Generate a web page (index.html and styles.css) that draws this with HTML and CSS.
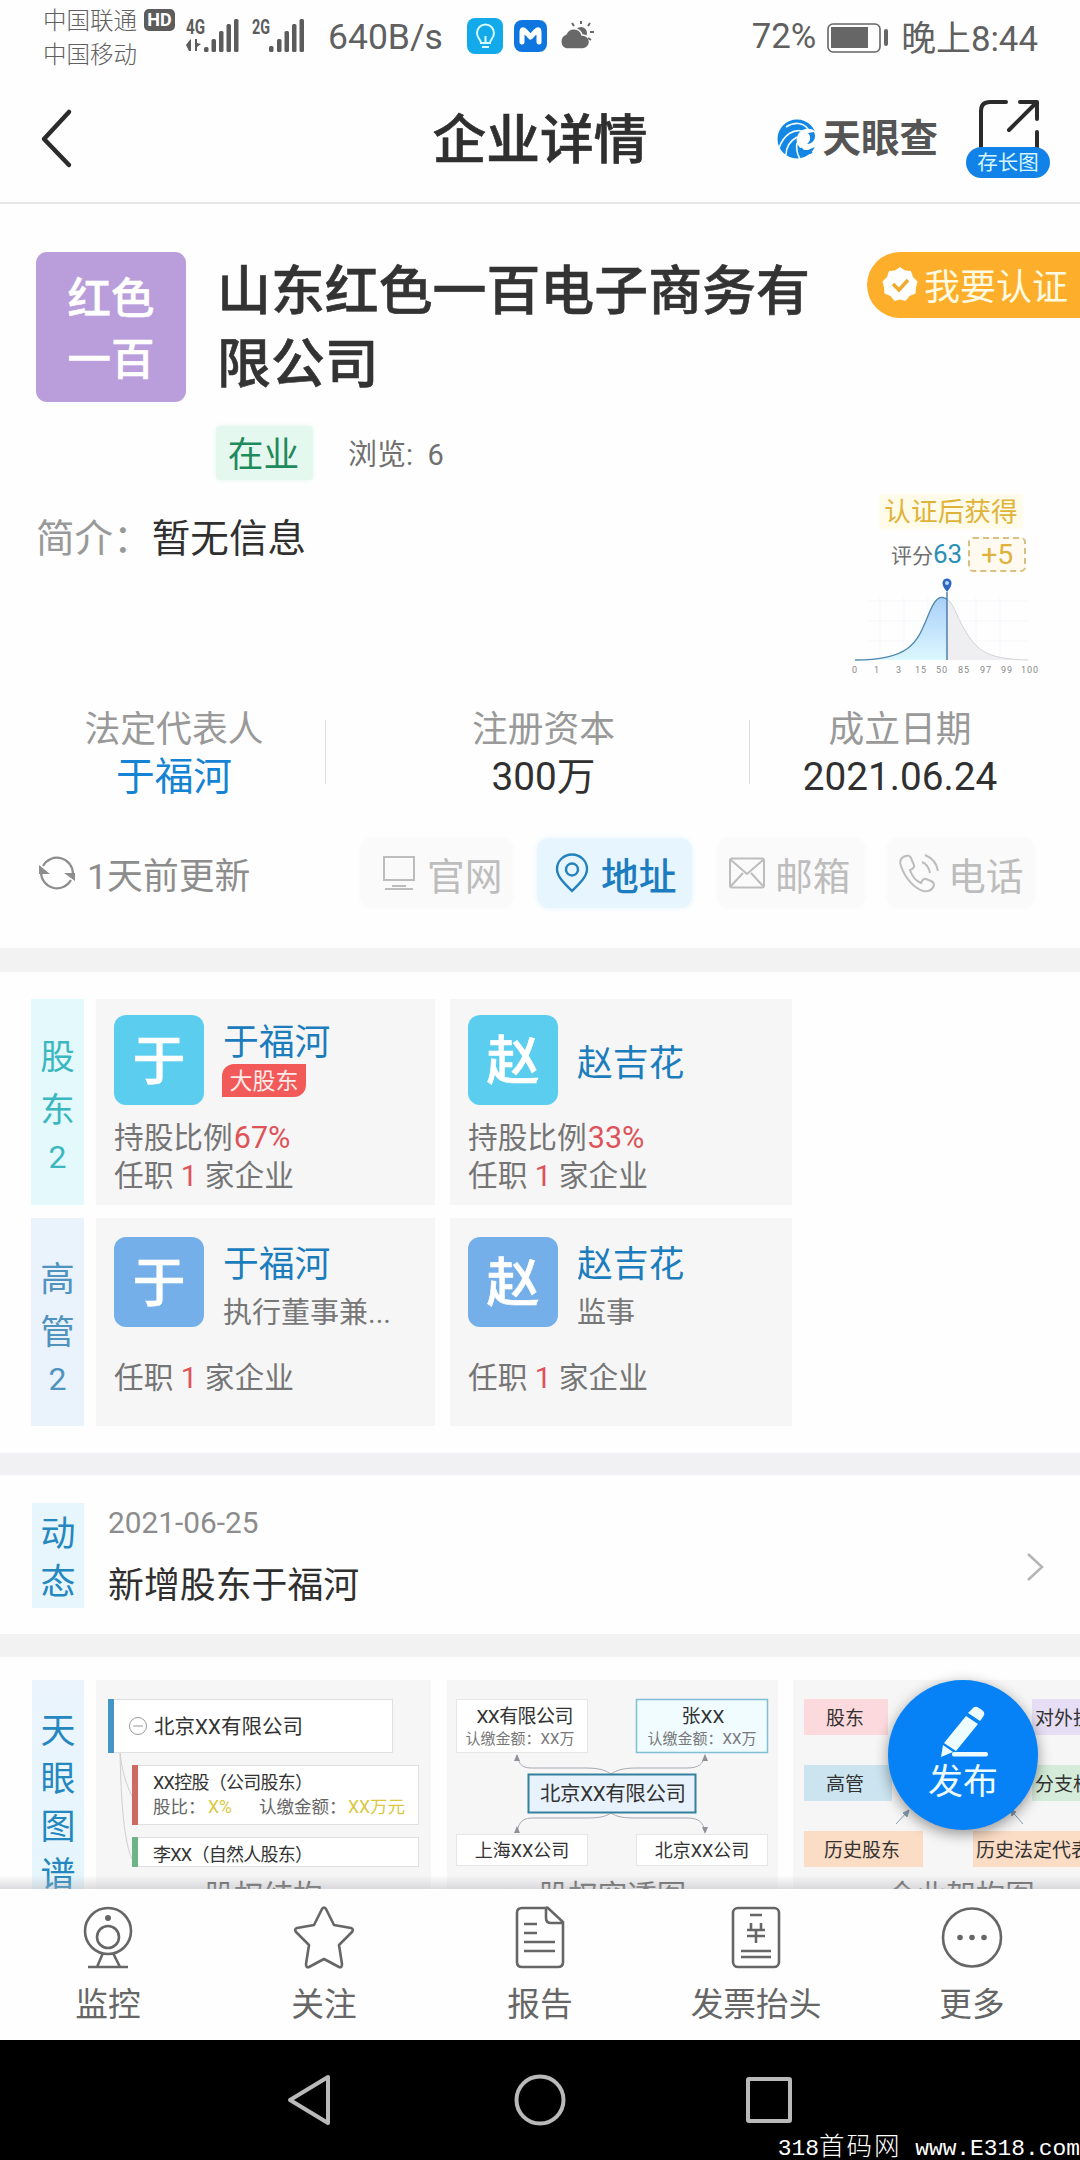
FILE: index.html
```html
<!DOCTYPE html>
<html lang="zh-CN">
<head>
<meta charset="utf-8">
<title>企业详情</title>
<link rel="stylesheet" href="styles.css">
</head>
<body>
<div class="phone">
  <div class="status">
    <div class="carriers">
      <div class="carrier">中国联通<span class="hd">HD</span></div>
      <div class="carrier">中国移动</div>
    </div>
    <svg class="signals" width="122" height="36" viewBox="0 0 122 36">
      <g fill="#5c5c5c">
        <text class="net" x="0" y="17" textLength="19" lengthAdjust="spacingAndGlyphs">4G</text>
        <path d="M3 34V24L0 28M3 24v10h2V22zM9 22v12h2v-4l4-3-4-1v-4z"/>
        <rect x="18" y="30" width="4.5" height="5" rx="1.5"/><rect x="25.500" y="22" width="4.500" height="13" rx="1.500"/><rect x="33" y="14" width="4.500" height="21" rx="1.500"/><rect x="40.500" y="7" width="4.500" height="28" rx="1.500"/><rect x="48" y="2" width="4.500" height="33" rx="1.500"/>
        <text class="net" x="66" y="17" textLength="18" lengthAdjust="spacingAndGlyphs">2G</text>
        <rect x="83" y="29" width="4.500" height="6" rx="1.500"/><rect x="91" y="22" width="4.500" height="13" rx="1.500"/><rect x="98.500" y="14" width="4.500" height="21" rx="1.500"/><rect x="106" y="7" width="4.500" height="28" rx="1.500"/><rect x="113.500" y="2" width="4.500" height="33" rx="1.500"/>
      </g>
    </svg>
    <span class="speed">640B/s</span>
    <svg class="status-apps" width="130" height="38" viewBox="0 0 130 38">
      <rect x="1" y="1" width="36" height="36" rx="8" fill="#12aaea"/>
      <g fill="none" stroke="#d8fbff" stroke-width="2"><path d="M15 26c0-3-4-5-4-10a8.500 8.500 0 0 1 17 0c0 5-4 7-4 10zM16 30h7M19.500 25v-6"/></g>
      <rect x="48" y="3" width="33" height="32" rx="8" fill="#0f76e0"/>
      <path d="M56 25V15q0-4 3-1l5.500 6 5.500-6q3-3 3 1v10" fill="none" stroke="#fff" stroke-width="5" stroke-linecap="round" stroke-linejoin="round"/>
      <g fill="#686868"><circle cx="115" cy="16" r="6"/><path d="M100 32a8 8 0 0 1 0-15 8.500 8.500 0 0 1 16 1 7 7 0 0 1 1 14z" stroke="#fff" stroke-width="1.500"/></g>
      <path d="M108 9l-2-3M115 7V4M122 9l2-3M124 15h4M122 21l3 2" stroke="#686868" stroke-width="2"/>
    </svg>
    <div class="status-right">
      <span>72%</span>
      <svg width="62" height="30" viewBox="0 0 62 30"><rect x="1" y="1" width="52" height="28" rx="5" fill="none" stroke="#666" stroke-width="1.600"/><rect x="4" y="4" width="37" height="21" fill="#666"/><rect x="57" y="6" width="4" height="17" rx="2" fill="#666"/></svg>
      <span>晚上8:44</span>
    </div>
  </div>

  <header class="appbar">
    <svg width="34" height="60" viewBox="0 0 34 60"><path d="M31 3L6 30l25 26" fill="none" stroke="#2b2b2b" stroke-width="4.500" stroke-linecap="round" stroke-linejoin="round"/></svg>
    <h1>企业详情</h1>
    <div class="appbar-right">
      <svg class="swirl" width="40" height="40" viewBox="0 0 40 40">
        <circle cx="20" cy="20" r="19.500" fill="#1486e4"/>
        <path d="M40 14c-4-5-13-6-18 0-6 8 0 18 9 17l9-4z" fill="#fff"/>
        <path d="M37 13c3 6-1 12-7 12 4-3 4-8 1-11z" fill="#1486e4"/>
        <g fill="none" stroke="#e9fbff" stroke-width="1.700"><path d="M25 12C17 10 7 15 2 29M31 10C26 3 17 3 9 8M20 18C13 22 9 28 9 36M20 24c-1 6 0 11 3 16"/></g>
        <path d="M24 29c3 5 7 6 11 4" fill="none" stroke="#1486e4" stroke-width="2"/>
      </svg>
      <span class="brand">天眼查</span>
      <div class="share">
        <svg width="62" height="50" viewBox="0 0 62 50"><path d="M3 49V12q0-9 9-9h16M42 3h17v17M59 33v16M31 31L58 4" fill="none" stroke="#2b2b2b" stroke-width="4" stroke-linecap="round" stroke-linejoin="round"/></svg>
        <span>存长图</span>
      </div>
    </div>
  </header>

  <main class="content">
    <section class="profile">
      <div class="company">
        <div class="logo">红色<br>一百</div>
        <h2>山东红色一百电子商务有限公司</h2>
        <div class="certify">
          <svg width="36" height="36" viewBox="0 0 36 36"><path d="M18 0l5 3.500 6 .5 2 6 4.500 4.500-1.500 6-.500 6-6 2.500-4 5-5.500-1.500-5.500 1.500-4-5-6-2.500-.500-6-1.500-6L5 10l2-6 6-.5z" fill="#fff"/><path d="M11 17l6 6 9-10" fill="none" stroke="#f0a92b" stroke-width="3.500"/></svg>
          <span>我要认证</span>
        </div>
      </div>
      <div class="tags"><span class="open">在业</span><span class="views">浏览:&nbsp; 6</span></div>
      <div class="about">
        <div class="intro"><span>简介：</span>暂无信息</div>
        <div class="score">
          <div class="score-title">认证后获得</div>
          <div class="score-line">评分<b>63</b><i>+5</i></div>
          <svg class="bell" width="200" height="102" viewBox="0 0 200 102">
            <defs><linearGradient id="bl" x1="0" y1="0" x2="0" y2="1"><stop offset="0" stop-color="#a9cff7"/><stop offset="1" stop-color="#dcf7ff"/></linearGradient></defs>
            <path d="M18 24h160M18 44h160M18 64h160M30 20v60M54 20v60M78 20v60M126 20v60M150 20v60" stroke="#f5f7fb"/>
            <path d="M5 83C65 83 68 62 80 34 87 18 92 19 97 22V83z" fill="url(#bl)"/>
            <path d="M97 22c6 4 9 15 14 24 14 26 22 36 67 37H97z" fill="#efeff1"/>
            <path d="M97 22c6 4 9 15 14 24 14 26 22 36 67 37" fill="none" stroke="#d2d4d8"/>
            <path d="M5 83C65 83 68 62 80 34 87 18 92 19 97 22" fill="none" stroke="#4d88ae" stroke-width="1.300"/>
            <path d="M97 15v68" stroke="#3b6f9f" stroke-width="1.300"/>
            <path d="M97 15c-3-4-4.500-6-4.500-9a4.500 4.500 0 0 1 9 0c0 3-1.500 5-4.500 9z" fill="#2e66c0"/><circle cx="97" cy="6" r="2" fill="#b5d8ff"/>
            <g class="ticks"><text x="5" y="96">0</text><text x="27" y="96">1</text><text x="49" y="96">3</text><text x="71" y="96">15</text><text x="92" y="96">50</text><text x="114" y="96">85</text><text x="136" y="96">97</text><text x="157" y="96">99</text><text x="180" y="96">100</text></g>
          </svg>
        </div>
      </div>
      <div class="facts">
        <div class="fact fact-a"><span>法定代表人</span><b class="link">于福河</b></div>
        <div class="fact fact-b"><span>注册资本</span><b>300万</b></div>
        <div class="fact fact-c"><span>成立日期</span><b>2021.06.24</b></div>
      </div>
      <div class="contacts">
        <div class="updated">
          <svg width="38" height="38" viewBox="0 0 38 38"><path d="M5 12A16 16 0 0 1 35 20M33 26A16 16 0 0 1 3 18" fill="none" stroke="#8d8d8d" stroke-width="2.200"/><path d="M26 19h11v8zM12 20H1v-9z" fill="#8d8d8d"/></svg>
          <span>1天前更新</span>
        </div>
        <div class="chip chip-site"><svg width="34" height="36" viewBox="0 0 34 36"><path d="M2 2h30v23H2zM3 34h28M10 31h14" fill="none" stroke="#bdbdbd" stroke-width="2"/></svg><span>官网</span></div>
        <div class="chip chip-addr"><svg width="36" height="40" viewBox="0 0 36 40"><path d="M18 38C11 31 3 24 3 16a15 14.500 0 0 1 30 0c0 8-8 15-15 22z" fill="none" stroke="#2382bd" stroke-width="2.400"/><circle cx="18" cy="16.500" r="6" fill="none" stroke="#2382bd" stroke-width="2.400"/></svg><span>地址</span></div>
        <div class="chip chip-mail"><svg width="38" height="32" viewBox="0 0 38 32"><rect x="2" y="1.500" width="34" height="29" rx="2" fill="none" stroke="#bdbdbd" stroke-width="2"/><path d="M3 3l16 14L35 3M3 29l12-13M35 29L23 16" fill="none" stroke="#bdbdbd" stroke-width="2"/></svg><span>邮箱</span></div>
        <div class="chip chip-tel"><svg width="42" height="40" viewBox="0 0 42 40"><g fill="none" stroke="#bdbdbd" stroke-width="2"><path d="M8 3C3 4 1 8 3 13c4 12 13 22 22 25 5 1 10-1 11-6 0-2-1-3-3-4l-5-2c-3-1-4 2-5 4-5-2-9-7-11-13 2-1 5-2 4-5l-3-7c-1-2-3-3-5-2z"/><path d="M24 9c5 2 7 6 8 11M27 2c7 3 12 9 13 16"/></g></svg><span>电话</span></div>
      </div>
    </section>

    <section class="people">
      <div class="people-row holders">
        <div class="side">股<br>东<span>2</span></div>
        <div class="person">
          <div class="who"><div class="face">于</div><div><div class="name">于福河</div><span class="major">大股东</span></div></div>
          <p>持股比例<em class="share-rate">67%</em></p><p>任职 <em>1</em> 家企业</p>
        </div>
        <div class="person">
          <div class="who who-single"><div class="face">赵</div><div class="name">赵吉花</div></div>
          <p>持股比例<em class="share-rate">33%</em></p><p>任职 <em>1</em> 家企业</p>
        </div>
      </div>
      <div class="people-row execs">
        <div class="side">高<br>管<span>2</span></div>
        <div class="person">
          <div class="who"><div class="face">于</div><div><div class="name">于福河</div><div class="role">执行董事兼...</div></div></div>
          <p>任职 <em>1</em> 家企业</p>
        </div>
        <div class="person">
          <div class="who"><div class="face">赵</div><div><div class="name">赵吉花</div><div class="role">监事</div></div></div>
          <p>任职 <em>1</em> 家企业</p>
        </div>
      </div>
    </section>

    <section class="news">
      <div class="side">动<br>态</div>
      <div class="news-text"><time>2021-06-25</time><p>新增股东于福河</p></div>
      <svg width="20" height="30" viewBox="0 0 20 30"><path d="M3 2l14 13L3 28" fill="none" stroke="#b5b5b5" stroke-width="2.500"/></svg>
    </section>

    <section class="graphs">
      <div class="side">天<br>眼<br>图<br>谱</div>
      <div class="graph graph-a">
        <svg width="335" height="195" viewBox="96 1680 335 195">
          <path d="M120 1752c1 50 4 90 12 107M120 1752c2 20 6 32 12 44" fill="none" stroke="#d0d0d0"/>
          <rect x="108.500" y="1699.500" width="284" height="53" fill="#fff" stroke="#e0e0e0"/><rect x="108" y="1699" width="6" height="54" fill="#4595c5"/>
          <circle cx="138" cy="1726" r="8.500" fill="none" stroke="#999"/><path d="M133 1726h10" stroke="#999"/>
          <text class="t20" x="154" y="1734" textLength="149">北京XX有限公司</text>
          <rect x="132.500" y="1765.500" width="286" height="59" fill="#fff" stroke="#e0e0e0"/><rect x="132" y="1765" width="6" height="60" fill="#cd6a63"/>
          <text class="t18" x="153" y="1789" textLength="160">XX控股（公司股东）</text>
          <text class="t17" x="153" y="1813">股比：</text><text class="t17 gold" x="208" y="1813">X%</text><text class="t17" x="259" y="1813">认缴金额：</text><text class="t17 gold" x="348" y="1813">XX万元</text>
          <rect x="132.500" y="1837.500" width="286" height="29" fill="#fff" stroke="#e0e0e0"/><rect x="132" y="1837" width="6" height="30" fill="#6fb487"/>
          <text class="t18" x="153" y="1861" textLength="160">李XX（自然人股东）</text>
        </svg>
        <div class="caption">股权结构</div>
      </div>
      <div class="graph graph-b">
        <svg width="331" height="195" viewBox="447 1680 331 195">
          <g fill="none" stroke="#a9a9b2"><path d="M517 1755c2 12 8 13 16 13h52c14 0 20 2 26 6 6-4 12-6 26-6h50c12 0 16-4 18-13M517 1832c2-12 8-14 16-14h52c14 0 20-1 26-5 6 4 12 5 26 5h50c12 0 16 4 18 14"/></g>
          <path d="M514 1761l3-7 3 7zM702 1761l3-7 3 7zM514 1833l3-7 3 7zM702 1827l3 7 3-7z" fill="#909098"/>
          <g fill="#fff" stroke="#e6e6e6"><rect x="456.500" y="1699.500" width="131" height="53"/><rect x="456.500" y="1834.500" width="131" height="31"/><rect x="636.500" y="1834.500" width="131" height="31"/></g>
          <rect x="636.500" y="1699.500" width="131" height="53" fill="#f0fcff" stroke="#80c0d5" stroke-width="1.500"/>
          <rect x="528.500" y="1774.500" width="167" height="38" fill="#e7f2fc" stroke="#34809f" stroke-width="2"/>
          <g text-anchor="middle"><text class="t19" x="525" y="1723" textLength="97">XX有限公司</text><text class="t15" x="520" y="1744">认缴金额：XX万</text><text class="t19" x="703" y="1723">张XX</text><text class="t15" x="702" y="1744">认缴金额：XX万</text><text class="t20" x="613" y="1801" textLength="146">北京XX有限公司</text><text class="t18" x="522" y="1857">上海XX公司</text><text class="t18" x="702" y="1857">北京XX公司</text></g>
        </svg>
        <div class="caption">股权穿透图</div>
      </div>
      <div class="graph graph-c">
        <svg width="330" height="195" viewBox="793 1680 330 195">
          <rect x="804" y="1699" width="84" height="36" fill="#fbd9dc"/><rect x="804" y="1765" width="88" height="36" fill="#cbe4f0"/><rect x="804" y="1831" width="119" height="36" fill="#fbdcc4"/><rect x="1032" y="1699" width="88" height="36" fill="#e6def4"/><rect x="1032" y="1765" width="88" height="36" fill="#d6ecda"/><rect x="973" y="1831" width="150" height="36" fill="#fbdcc4"/>
          <g stroke="#879daf" fill="#7f9db8"><path d="M896 1824l13-14M1023 1824l-13-15"/><path d="M909 1810l-2 7-4-4zM1010 1809l2 7 4-4z"/></g>
          <text class="t19" x="826" y="1725">股东</text><text class="t19" x="826" y="1791">高管</text><text class="t19" x="824" y="1857">历史股东</text><text class="t19" x="1035" y="1725">对外投资</text><text class="t19" x="1035" y="1791">分支机构</text><text class="t19" x="976" y="1857">历史法定代表人</text>
        </svg>
        <div class="caption">企业架构图</div>
      </div>
    </section>
    <div class="fade"></div>
    <div class="publish">
      <svg width="56" height="54" viewBox="0 0 56 54"><g fill="#edfcff"><path d="M37 4q3-4 7-1l3 2q4 3 1 7l-3 4-12-8zM31 11l12 8-22 27-12-8zM8 40l10 7-12 5z"/><rect x="17" y="47" width="36" height="4.500" rx="2"/></g></svg>
      <span>发布</span>
    </div>
  </main>

  <nav class="tabs">
    <div class="tab"><svg width="62" height="64" viewBox="0 0 62 64"><g fill="none" stroke="#666" stroke-width="2.600"><circle cx="31" cy="26" r="23"/><circle cx="31" cy="32" r="11"/><path d="M26 48l-6 14M36 48l7 14M11 62h40"/></g><circle cx="31" cy="13" r="3" fill="#666"/></svg><span>监控</span></div>
    <div class="tab"><svg width="62" height="64" viewBox="0 0 62 64"><path d="M29 4q2-3 4 0l8 16 17 3q3 1 1 4L46 40l3 19q0 4-3 3L31 54l-15 8q-3 1-3-3l3-19L3 27q-2-3 1-4l17-3z" fill="none" stroke="#666" stroke-width="2.600" stroke-linejoin="round"/></svg><span>关注</span></div>
    <div class="tab"><svg width="62" height="64" viewBox="0 0 62 64"><path d="M37 3H13q-5 0-5 5v49q0 5 5 5h36q5 0 5-5V17L39 3q-2-1-2 1v9q0 5 5 5h12M15 19h13M15 28h13M15 37h31M15 46h31" fill="none" stroke="#666" stroke-width="2.600"/></svg><span>报告</span></div>
    <div class="tab"><svg width="62" height="64" viewBox="0 0 62 64"><rect x="8" y="3" width="46" height="59" rx="5" fill="none" stroke="#666" stroke-width="2.600"/><path d="M25 10h12M26 18v6M36 18v6M22 25h18M22 31h18M31 25v13M16 46h30M16 52h30" fill="none" stroke="#666" stroke-width="2.600"/></svg><span>发票抬头</span></div>
    <div class="tab"><svg width="62" height="64" viewBox="0 0 62 64"><circle cx="31" cy="32.500" r="29" fill="none" stroke="#666" stroke-width="2.600"/><g fill="#666"><circle cx="19" cy="32.500" r="2.800"/><circle cx="31" cy="32.500" r="2.800"/><circle cx="43" cy="32.500" r="2.800"/></g></svg><span>更多</span></div>
  </nav>
  <div class="system">
    <svg width="520" height="60" viewBox="0 0 520 60"><g fill="none" stroke="#b9b9b9" stroke-width="4" stroke-linejoin="round"><path d="M48 7v46L10 30z"/><circle cx="260" cy="30" r="23.500"/><rect x="468" y="9" width="42" height="42" rx="1"/></g></svg>
    <div class="watermark">318<span>首码网</span> www.E318.com</div>
  </div>
</div>
</body>
</html>
```

FILE: styles.css
```css
* { box-sizing: border-box; }
body { margin: 0; background: #fff; font-family: Roboto, "Noto Sans CJK SC", sans-serif; color: #333; }
h1, h2, p { margin: 0; }
svg { display: block; flex: none; overflow: visible; }
em, i { font-style: normal; }
.phone { width: 1080px; height: 2160px; display: flex; flex-direction: column; overflow: hidden; background: #fefefe; }

.status { height: 75px; flex: none; display: flex; align-items: flex-start; color: #606060; padding: 4px 42px 0 43px; white-space: nowrap; font-weight: 300; }
.carriers { width: 143px; }
.carrier { height: 34px; line-height: 34px; font-size: 23.5px; display: flex; align-items: center; }
.hd { margin: -2px 0 0 7px; width: 31px; height: 22px; border-radius: 5px; background: #5c5c5c; color: #fff; font-weight: 700; font-size: 18px; line-height: 22px; text-align: center; }
.signals { margin-top: 13px; }
.net { font-size: 20px; font-weight: 700; }
.speed { margin-left: 20px; width: 137px; font-size: 35.5px; line-height: 67px; font-weight: 400; }
.status-apps { margin: 13px 0 0 1px; }
.status-right { margin-left: auto; display: flex; align-items: center; gap: 11px; height: 64px; font-size: 34.8px; font-weight: 400; }
.status-right svg { margin: 3px 1px 0 0; }

.appbar { height: 129px; flex: none; display: grid; grid-template-columns: 1fr auto 1fr; align-items: center; padding: 0 30px 0 38px; border-bottom: 2px solid #e6e6e6; }
.appbar h1 { font-size: 53.7px; font-weight: 500; line-height: 80px; margin: 0 8px 0 0; color: #2f2f2f; padding-top: 4px; -webkit-text-stroke: .7px currentColor; }
.appbar-right { display: flex; align-items: center; justify-content: flex-end; }
.brand { font-size: 38.5px; font-weight: 700; margin: 0 28px 0 5px; line-height: 50px; color: #555; }
.share { width: 84px; display: flex; flex-direction: column; align-items: center; margin-top: -1px; }
.share span { width: 84px; height: 31px; border-radius: 16px; background: #1182e8; color: #d5f6ff; font-size: 20.5px; line-height: 32px; text-align: center; margin-top: -2px; position: relative; }
.share svg { margin-left: 1px; }

.content { flex: 1; overflow: hidden; position: relative; min-height: 0; }
.profile { height: 744px; padding-top: 48px; }
.company { display: flex; align-items: flex-start; height: 174px; padding-left: 36px; }
.logo { width: 150px; height: 150px; border-radius: 11px; background: #b99edb; color: #fff; font-size: 43.5px; font-weight: 500; line-height: 61px; padding-top: 17px; text-align: center; -webkit-text-stroke: .5px currentColor; }
.company h2 { width: 602px; margin-left: 31px; font-size: 53.9px; line-height: 73px; font-weight: 500; padding-top: 3px; color: #333; -webkit-text-stroke: .6px currentColor; }
.certify { margin-left: auto; width: 213px; height: 66px; border-radius: 33px 0 0 33px; background: #fdae2b; color: #fffbe2; display: flex; align-items: center; padding-left: 15px; gap: 6px; font-size: 36px; }
.certify span { margin-top: -3px; }
.tags { display: flex; height: 54px; padding-left: 216px; line-height: 58px; }
.open { width: 97px; height: 54px; background: #e5f8f0; color: #1f8a5b; font-size: 35.7px; text-align: center; padding-right: 2px; border-radius: 4px; box-shadow: 0 0 5px #e5f8f0; }
.views { margin-left: 35px; font-size: 29px; color: #707070; }
.about { display: flex; justify-content: space-between; height: 231px; padding: 15px 30px 0 36px; }
.intro { font-size: 38.6px; line-height: 88px; color: #303030; }
.intro span { color: #999; }
.score { width: 200px; }
.score-title { width: 142px; margin-left: 30px; height: 33px; line-height: 33px; padding-top: 1px; font-size: 26.7px; text-align: center; color: #dfb33a; background: #fffbe9; box-shadow: 0 0 5px #fffbe9; }
.score-line { display: flex; align-items: center; height: 49px; padding: 3px 0 0 41px; font-size: 21px; color: #707070; }
.score-line b { font-size: 26px; font-weight: 400; color: #2a8fb4; }
.score-line i { margin-left: 6px; width: 58px; height: 35px; border: 2px dashed #d9bf83; border-radius: 5px; background: #fffaf0; color: #e0b13c; font-size: 28.5px; line-height: 31px; text-align: center; }
.ticks { font-size: 9px; text-anchor: middle; letter-spacing: 1px; }
.facts { display: flex; height: 125px; }
.fact { display: flex; flex-direction: column; align-items: center; font-size: 35.8px; color: #999; }
.fact span { line-height: 36px; padding-top: 1px; }
.fact b { font-weight: 400; font-size: 38.7px; line-height: 57px; color: #303030; }
.fact b.link { color: #1583d3; }
.fact-a { width: 326px; padding-left: 22px; background: linear-gradient(#e4e0e2, #e4e0e2) right 9px / 1px 64px no-repeat; }
.fact-b { width: 424px; padding-left: 11px; background: linear-gradient(#ddd, #ddd) right 9px / 1px 64px no-repeat; }
.fact-c { width: 300px; }
.contacts { display: flex; height: 74px; align-items: center; padding-left: 38px; font-size: 35.8px; color: #8d8d8d; }
.updated { display: flex; align-items: center; width: 322px; gap: 11px; }
.chip { display: flex; align-items: center; height: 70px; border-radius: 12px; background: #fafafa; box-shadow: 0 0 5px #fafafa; color: #bdbdbd; font-size: 37.7px; gap: 11px; }
.chip-site { width: 153px; padding-left: 22px; }
.chip-addr { width: 155px; margin-left: 24px; padding-left: 17px; background: #e7f5fe; color: #1c7cc0; box-shadow: 0 0 6px #e7f5fe; font-weight: 500; }
.chip-mail { width: 148px; margin-left: 25px; padding-left: 11px; gap: 9px; }
.chip-tel { width: 148px; margin-left: 22px; padding-left: 11px; gap: 8px; }

.people { border-top: 24px solid #f2f2f3; padding-top: 27px; height: 505px; padding-left: 31px; }
.people-row { display: flex; height: 206px; margin-bottom: 13px; }
.side { width: 53px; flex: none; text-align: center; font-size: 35px; line-height: 53px; }
.holders .side { background: #e4f9fc; color: #3bb7c1; padding-top: 32px; line-height: 53px; }
.execs .side { background: #eaf2fc; color: #4f93be; padding-top: 35px; line-height: 53px; }
.people-row.execs { height: 208px; }
.people-row .side { font-size: 34.5px; }
.side span { display: block; font-size: 32px; line-height: 40px; }
.person { width: 339px; margin-left: 12px; background: #f6f6f7; padding: 16px 0 0 18px; }
.person + .person { width: 342px; margin-left: 15px; }
.execs .person { padding-top: 19px; }
.who { display: flex; height: 104px; gap: 19px; }
.face { width: 90px; height: 90px; border-radius: 12px; background: #5bcdef; color: #fff; font-size: 53px; font-weight: 500; text-align: center; line-height: 94px; -webkit-text-stroke: .6px currentColor; }
.execs .face { background: #74afe9; }
.name { font-size: 35.8px; color: #1c7dbd; line-height: 50px; margin-top: 3px; }
.who-single .name { margin-top: 24px; }
.major { display: block; width: 84px; height: 33px; margin: -4px 0 0 -1px; border-radius: 12px 0 12px 0; background: #f15a59; color: #ffeaea; font-size: 23px; line-height: 35px; text-align: center; }
.role { font-size: 29px; color: #777; line-height: 40px; margin-top: 3px; }
.person p { font-size: 29.7px; line-height: 38px; color: #757575; white-space: pre; }
.person em { color: #de5358; }
.share-rate { font-size: 30.5px; margin-left: 1px; }
.execs .person p { margin-top: 18px; }

.news { border-top: 22px solid #f1f1f3; border-bottom: 23px solid #f2f2f3; height: 204px; display: flex; padding: 28px 35px 0 32px; }
.news .side { width: 52px; height: 105px; background: #e7f5fd; color: #2587c0; line-height: 48px; padding-top: 8px; }
.news-text { flex: 1; padding-left: 24px; }
.news time { display: block; font-size: 29.8px; line-height: 40px; color: #8c8c8c; }
.news p { font-size: 35.9px; line-height: 60px; margin-top: 13px; color: #2f2f2f; }
.news svg { margin-top: 49px; }

.graphs { display: flex; padding: 23px 0 0 32px; width: 1160px; }
.graphs .side { width: 52px; height: 230px; background: linear-gradient(#ebf4fd, #e5f6fd); color: #2587bf; line-height: 48px; padding-top: 28px; }
.graph { flex: none; background: #f7f6f7; height: 240px; }
.graph-a { width: 335px; margin-left: 12px; }
.graph-b { width: 331px; margin-left: 16px; }
.graph-c { width: 330px; margin-left: 15px; }
.caption { font-size: 29.5px; line-height: 44px; color: #666; text-align: center; margin-top: -1px; }
.graph-c .caption { width: 336px; }
text { fill: #333; }
.net { fill: #5c5c5c; }
.ticks text { fill: #888; }
.t20 { font-size: 20.5px; }
.t19 { font-size: 19px; }
.t18 { font-size: 18px; }
.t17 { font-size: 17.5px; fill: #666; }
.t15 { font-size: 15px; fill: #777; }
.gold { fill: #d8c840; }
.fade { position: absolute; left: 0; right: 0; bottom: 0; height: 14px; background: linear-gradient(rgba(190,190,195,0), rgba(180,180,185,.45)); }
.publish { position: absolute; left: 888px; top: 1476px; width: 150px; height: 150px; border-radius: 50%; background: #0781f6; box-shadow: 0 4px 14px rgba(0,0,0,.4); color: #edfcff; display: flex; flex-direction: column; align-items: center; padding-top: 25px; font-size: 35px; }
.publish span { line-height: 48px; }

.tabs { height: 151px; flex: none; display: flex; background: #fefefe; padding-top: 16px; }
.tab { flex: 1; display: flex; flex-direction: column; align-items: center; color: #666; font-size: 32.7px; }
.tab span { line-height: 40px; margin-top: 16px; }
.system { height: 120px; flex: none; background: #000; display: flex; flex-direction: column; align-items: center; padding-top: 30px; }
.watermark { align-self: flex-end; font-family: "Liberation Mono", "Noto Sans CJK SC", monospace; font-size: 22.9px; line-height: 30px; color: #fff; margin-top: 4px; white-space: pre; }
.watermark span { font-weight: 300; line-height: 20px; font-family: "Noto Sans CJK SC", sans-serif; font-size: 25.5px; letter-spacing: 2px; }
```
